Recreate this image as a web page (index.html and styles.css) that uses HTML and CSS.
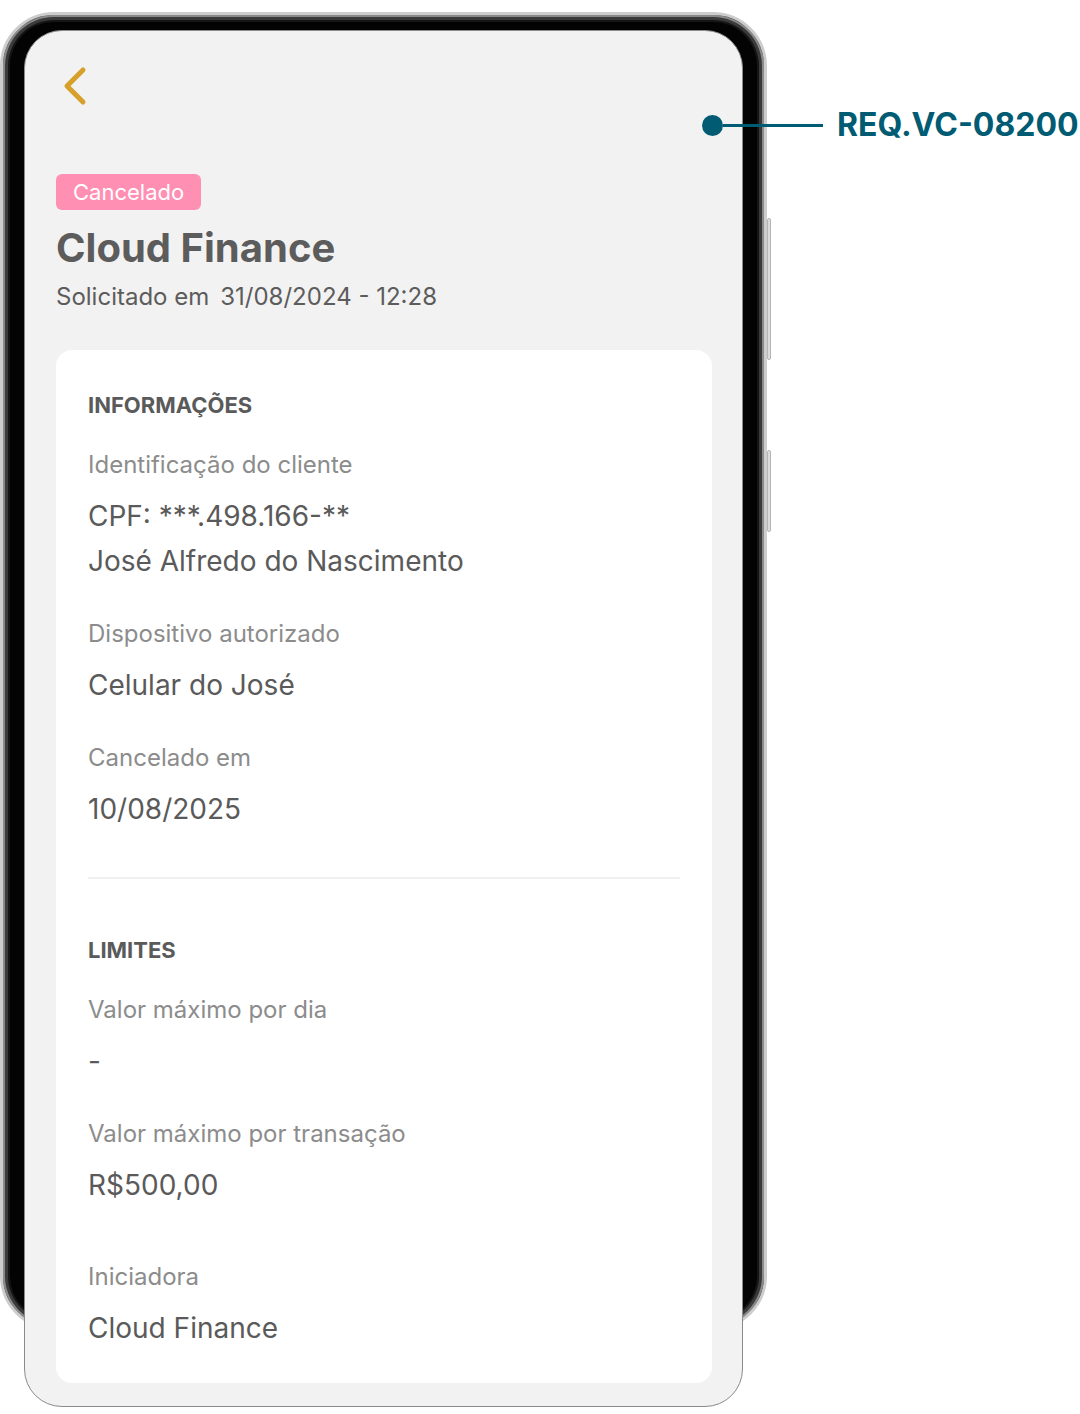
FILE: index.html
```html
<!DOCTYPE html>
<html lang="pt-BR">
<head>
<meta charset="utf-8">
<title>Cloud Finance - Detalhes</title>
<link rel="stylesheet" href="styles.css">
</head>
<body>
<div class="stage">
  <div class="device">
    <span class="side-btn side-btn-1"></span>
    <span class="side-btn side-btn-2"></span>
    <div class="screen">
      <div class="topbar">
        <svg class="back" width="26" height="40" viewBox="0 0 26 40" aria-label="Voltar">
          <polyline points="21,4 5,20 21,36" fill="none" stroke="#d6a02b" stroke-width="5" stroke-linecap="round" stroke-linejoin="round"/>
        </svg>
      </div>
      <span class="badge">Cancelado</span>
      <h1 class="title">Cloud Finance</h1>
      <p class="subtitle"><span>Solicitado em</span><span>31/08/2024 - 12:28</span></p>

      <div class="card">
        <section class="section">
          <h2 class="section-title">INFORMAÇÕES</h2>
          <div class="field">
            <div class="label">Identificação do cliente</div>
            <div class="value-group">
              <div class="value">CPF: ***.498.166-**</div>
              <div class="value">José Alfredo do Nascimento</div>
            </div>
          </div>
          <div class="field">
            <div class="label">Dispositivo autorizado</div>
            <div class="value">Celular do José</div>
          </div>
          <div class="field">
            <div class="label">Cancelado em</div>
            <div class="value">10/08/2025</div>
          </div>
        </section>
        <hr class="divider">
        <section class="section">
          <h2 class="section-title">LIMITES</h2>
          <div class="field">
            <div class="label">Valor máximo por dia</div>
            <div class="value">-</div>
          </div>
          <div class="field">
            <div class="label">Valor máximo por transação</div>
            <div class="value">R$500,00</div>
          </div>
          <div class="field field-last">
            <div class="label">Iniciadora</div>
            <div class="value">Cloud Finance</div>
          </div>
        </section>
      </div>
    </div>
  </div>

  <div class="callout">
    <span class="callout-dot"></span>
    <span class="callout-line"></span>
    <span class="callout-text">REQ.VC-08200</span>
  </div>
</div>
</body>
</html>
```

FILE: styles.css
```css
* { box-sizing: border-box; }

html, body {
  margin: 0;
  padding: 0;
  background: #ffffff;
}

body {
  font-family: Inter, "Noto Sans", "Liberation Sans", sans-serif;
  color: #5a5a5a;
  width: 1080px;
  height: 1414px;
  overflow: hidden;
}

.stage {
  position: relative;
  padding-top: 12px;
  display: flex;
  align-items: flex-start;
}

/* Phone body */
.device {
  position: relative;
  width: 767px;
  height: 1318px;
  border: 3px solid #cdcdcd;
  border-radius: 54px;
  background: #030303;
  box-shadow: inset 0 0 0 2px #8a8a8a, inset 0 0 0 5px #3a3a3a, inset 0 0 0 7px #151515;
  padding: 15px 21px 0 21px;
}

.side-btn {
  position: absolute;
  right: -7px;
  width: 4px;
  background: #dcdcdc;
  border: 1px solid #b5b5b5;
  border-radius: 2px;
}
.side-btn-1 { top: 203px; height: 142px; }
.side-btn-2 { top: 435px; height: 82px; }

/* Screen */
.screen {
  width: 719px;
  height: 1377px;
  background: #f2f2f2;
  border: 1px solid #8a8a8a;
  border-radius: 38px;
  padding: 35px 30px 0 31px;
  display: flex;
  flex-direction: column;
  align-items: flex-start;
}

.topbar {
  height: 40px;
  padding-left: 6px;
}
.back { display: block; }

.badge {
  margin-top: 68px;
  height: 36px;
  line-height: 36px;
  padding: 0 17px;
  background: #ff8fb3;
  color: #ffffff;
  font-size: 22px;
  border-radius: 6px;
}

.title {
  margin: 16px 0 0;
  font-size: 40px;
  line-height: 44px;
  font-weight: 700;
  color: #5c5c5c;
}

.subtitle {
  margin: 13px 0 0;
  font-size: 24px;
  line-height: 28px;
  color: #5c5c5c;
  display: flex;
  gap: 11px;
}

/* Card */
.card {
  margin-top: 39px;
  align-self: stretch;
  background: #ffffff;
  border-radius: 16px;
  padding: 43px 32px 39px;
}

.section-title {
  margin: 0;
  font-size: 22px;
  line-height: 24px;
  font-weight: 700;
  color: #5a5a5a;
}

.field {
  margin-top: 34px;
  display: flex;
  flex-direction: column;
  gap: 21px;
}
.field + .field { margin-top: 43px; }
.field-last.field { margin-top: 62px; }

.label {
  font-size: 24px;
  line-height: 28px;
  color: #8c8c8c;
}

.value-group {
  display: flex;
  flex-direction: column;
  gap: 13px;
}

.value {
  font-size: 28px;
  line-height: 32px;
  color: #5a5a5a;
}

.divider {
  margin: 52px 0 59px;
  border: 0;
  height: 2px;
  background: #f0f0f0;
}

/* Annotation */
.callout {
  position: absolute;
  left: 702px;
  top: 108px;
  display: flex;
  align-items: center;
}
.callout-dot {
  width: 21px;
  height: 21px;
  border-radius: 50%;
  background: #005b73;
}
.callout-line {
  width: 100px;
  height: 3px;
  background: #005b73;
}
.callout-text {
  margin-left: 14px;
  font-size: 32px;
  line-height: 34px;
  font-weight: 700;
  color: #005b73;
}
```
